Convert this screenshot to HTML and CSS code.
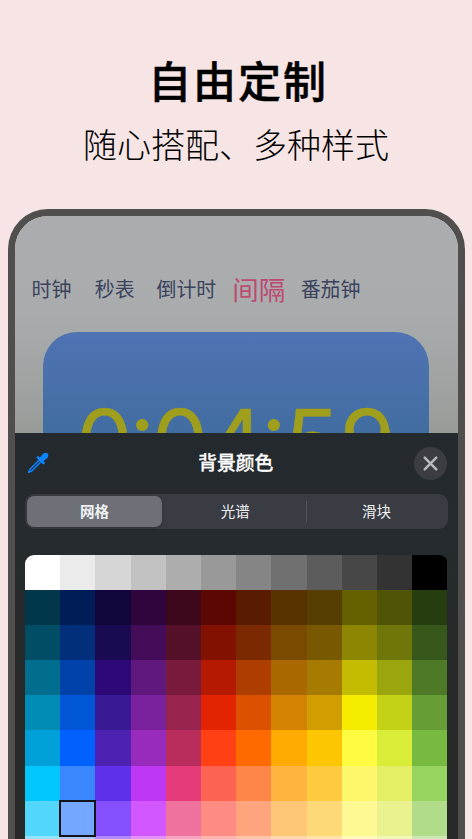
FILE: index.html
```html
<!DOCTYPE html>
<html lang="zh-CN">
<head>
<meta charset="utf-8">
<title>自由定制</title>
<link rel="stylesheet" href="styles.css">
</head>
<body>
<header class="hero">
  <h1>自由定制</h1>
  <p>随心搭配、多种样式</p>
</header>
<main class="phone">
  <section class="app">
    <nav class="modes">
      <span class="m1">时钟</span><span class="m2">秒表</span><span class="m3">倒计时</span><span class="active">间隔</span><span>番茄钟</span>
    </nav>
    <div class="timer">
      <b>0</b><i>:</i><b>0</b><b>4</b><i>:</i><b>5</b><b>9</b>
    </div>
  </section>
  <section class="sheet">
    <div class="bar">
      <svg class="dropper" viewBox="0 0 22 22">
        <path d="M3 17.2 12.2 8 14 9.8 4.8 19 1.6 20.4Z" fill="none" stroke="#0a84ff" stroke-width="1.5" stroke-linejoin="round"/>
        <path d="M10.8 5.4 16.6 11.2" stroke="#0a84ff" stroke-width="2.6" stroke-linecap="round"/>
        <path d="M12 6.5 14.8 3.3C16.2.5 19.2.1 20.6 1.4 22 2.8 21.5 5.8 18.7 7.2L15.5 10Z" fill="#0a84ff"/>
      </svg>
      <h2>背景颜色</h2>
      <button class="close" aria-label="关闭">
        <svg viewBox="0 0 33 33"><path d="M10.7 10.7 22.3 22.3M22.3 10.7 10.7 22.3" stroke="#b8b9bc" stroke-width="2.5" stroke-linecap="round"/></svg>
      </button>
    </div>
    <div class="tabs">
      <span class="on">网格</span><span>光谱</span><span class="last">滑块</span>
    </div>
    <div class="swatches" id="swatches"></div>
  </section>
</main>
<script src="script.js"></script>
</body>
</html>
```
FILE: styles.css
```css
* { box-sizing: border-box; }
html, body { margin: 0; height: 839px; overflow: hidden; }
body {
  background: #f6e5e4;
  font-family: "Noto Sans CJK SC", sans-serif;
  display: flex;
  flex-direction: column;
}
.hero { height: 209px; flex: none; text-align: center; color: #000; }
.hero h1 {
  margin: 0;
  padding: 52px 0 0 4px;
  font-size: 43px;
  line-height: 54px;
  font-weight: 500;
  letter-spacing: 1.9px;
  -webkit-text-stroke: 0.5px #000;
}
.hero p {
  margin: 0;
  padding-top: 18px;
  font-size: 34px;
  line-height: 40px;
  font-weight: 300;
}
.phone {
  width: 456.5px;
  height: 630px;
  flex: none;
  margin-left: 8px;
  border: 7px solid #504f4e;
  border-bottom: 0;
  border-radius: 40px 40px 0 0;
  overflow: hidden;
}
.app {
  height: 217px;
  overflow: hidden;
  background: linear-gradient(#abacb0, #a9acad 45%, #989c99);
}
.modes {
  height: 116px;
  padding: 28px 0 0 16.5px;
  display: flex;
  align-items: center;
  font-size: 19.9px;
  color: #3a425c;
  white-space: nowrap;
}
.m1 { margin-right: 23.5px; }
.m2 { margin-right: 22px; }
.m3 { margin-right: 16px; }
.modes .active { font-size: 26.5px; color: #be4a72; margin-right: 15.5px; font-weight: 400; }
.timer {
  width: 386.5px;
  height: 101px;
  margin-left: 27.5px;
  padding: 52px 0 0 34px;
  border-radius: 34px 34px 0 0;
  background: linear-gradient(#5073b3, #416da1);
  color: #a09e1d;
  display: flex;
  font: 400 89px/116px Inter, sans-serif;
  -webkit-text-stroke: 0.5px #a09e1d;
}
.timer b, .timer i { font-weight: 400; font-style: normal; width: 56px; display: flex; justify-content: center; }
.timer i { width: 19.5px; margin-top: -9px; }
.sheet {
  height: 406px;
  overflow: hidden;
  padding: 0 10px;
  background: linear-gradient(#24292d, #252b2e 25%, #272929 60%);
}
.bar { height: 60.5px; display: flex; align-items: center; }
.dropper { width: 22px; height: 22px; margin-left: 1.5px; }
.bar h2 {
  margin: 0;
  flex: 1;
  text-align: center;
  font-size: 18.8px;
  line-height: 28px;
  font-weight: 500;
  -webkit-text-stroke: 0.3px #fff;
  color: #fff;
  padding: 0 0 2px 9px;
}
.close { width: 33px; height: 33px; margin-right: 0.5px; padding: 0; border: 0; border-radius: 50%; background: #3b3d42; }
.close svg { display: block; width: 33px; height: 33px; }
.tabs {
  height: 35.5px;
  padding: 2px;
  border-radius: 9px;
  background: #393c43;
  display: grid;
  grid-template-columns: 135px 1fr 140px;
  font-size: 14.5px;
  color: #f1f1f3;
}
.tabs span { display: flex; align-items: center; justify-content: center; padding-bottom: 2px; }
.tabs .on { border-radius: 7px; background: #6e7077; font-weight: 700; box-shadow: 0 1px 4px #0003; }
.tabs span:nth-child(2) { padding-left: 3px; }
.tabs .last {
  background: linear-gradient(#51545b, #51545b) left center / 1px 21px no-repeat;
  padding-left: 2px;
}
.swatches {
  margin-top: 25.5px;
  display: grid;
  grid-template-columns: repeat(12, 1fr);
  grid-auto-rows: 35.2px;
  border-radius: 9px 9px 0 0;
  overflow: hidden;
}
.swatches .selected { outline: 2.5px solid #111418; outline-offset: -1px; position: relative; z-index: 1; }
```
FILE: script.js
```js
const rows = [
  'ffffff ebebeb d6d6d6 c2c2c2 adadad 999999 858585 707070 5c5c5c 474747 333333 000000',
  '00374a 011d57 11053b 2e063d 3c071b 5c0701 5a1c00 583300 563d00 666100 4f5504 263e0f',
  '004d65 012f7b 1a0a52 450d59 551029 831100 7b2900 7a4a00 785800 8d8602 6f760a 38571a',
  '016e8f 0042a9 2c0977 61187c 791a3d b51a00 ad3e00 a96800 a67b01 c4bc00 9ba50e 4e7a27',
  '008cb4 0056d6 371a94 7a219e 99244f e22400 da5100 d38301 d19d01 f5ec00 c3d117 669d34',
  '00a1d8 0061fd 4d22b2 982abc b92d5d ff4015 ff6a00 ffab01 fcc700 fefb41 d9ec37 76bb40',
  '01c7fc 3a87fd 5e30eb be38f3 e63b7a fe6250 fe8648 feb43f fecb3e fff76b e4ef65 96d35f',
  '52d6fc 74a7ff 864ffd d357fe ee719e ff8c82 fea57d fec777 fed977 fff994 eaf28f b1dd8b',
  '93e3fc a7c6ff b18cfe e292fe f4a4c0 ffb5af ffc5ab ffd9a8 fee4a8 fffbb9 f1f7b7 cde8b5'
];
const grid = document.getElementById('swatches');
rows.forEach((row, r) => row.split(' ').forEach((color, c) => {
  const cell = document.createElement('div');
  cell.style.background = '#' + color;
  if (r === 7 && c === 1) cell.className = 'selected';
  grid.append(cell);
}));
```
